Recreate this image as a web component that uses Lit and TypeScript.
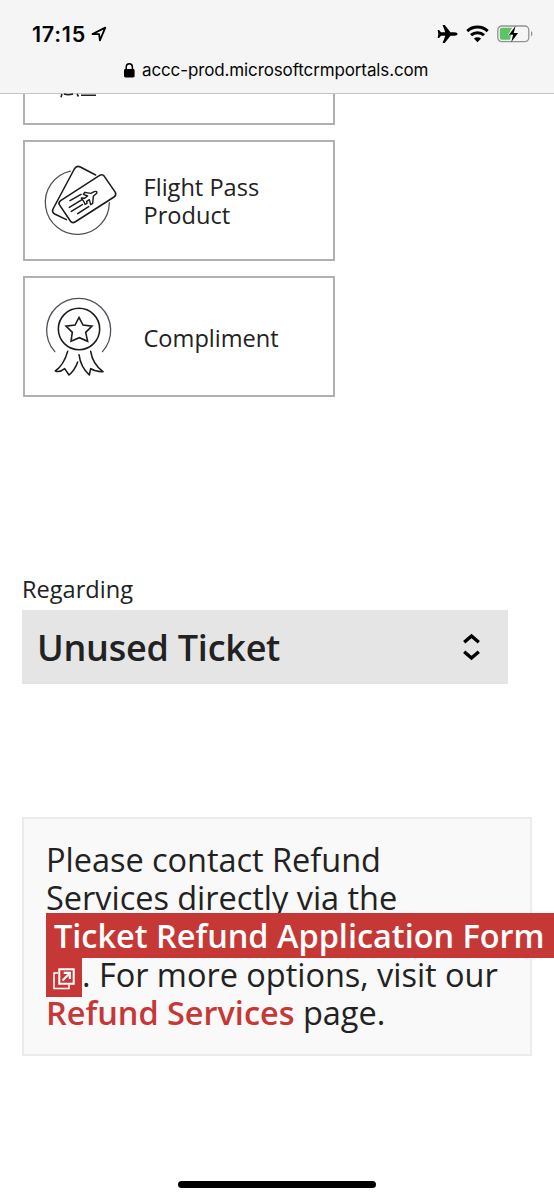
import { LitElement, html, css, svg } from "lit";
import { customElement } from "lit/decorators.js";

const passIcon = svg`
  <g fill="none" stroke="#1c1c1c" stroke-width="4.700" stroke-linejoin="round" stroke-linecap="round">
    <path stroke="#50505a" stroke-width="3.900" d="M152 108.500A96 96 0 1 0 269 203"/>
    <path d="M228 120 182 96Q171 90 164 102L100 222Q96 232 105 237L140 254"/>
    <path d="M124 196 240 121Q248 116 254 124L287 172Q291 180 283 186L166 261Q158 266 152 258L119 209Q115 202 124 196Z"/>
    <path d="M151 197 184 178M149 217 187 194M155 229 188 209M174 236 207 215"/>
    <path stroke-width="4.300" d="M185 189 194 190 204 183 191 178 196 172 213 175 224 170Q234 167 231 175L221 184 219 205 213 209 209 194 201 199 202 205 196 208 192 199Z"/>
  </g>`;

const rosetteIcon = svg`
  <g fill="none" stroke="#1c1c1c" stroke-width="4.700" stroke-linejoin="round" stroke-linecap="round">
    <path stroke="#50505a" stroke-width="3.900" d="M104.500 245A96 96 0 1 1 247.500 245"/>
    <circle cx="177" cy="177" r="62"/>
    <path stroke-linejoin="miter" d="M177 142 189 165 216 168.500 197 187 203 214 178 203 153 214 157 187 138 168.500 165 165Z"/>
    <path d="M143 244Q132 284 106 303Q120 308 134 296L147 315Q165 300 173 276M177 254Q182 292 208 315L212 296Q228 306 249 305Q218 282 212 244"/>
  </g>`;

@customElement("choice-card")
class ChoiceCard extends LitElement {
  static styles = css`
    :host { display: block; }
    .card {
      box-sizing: border-box; width: 312px; height: 121px;
      border: 2px solid #b0b0b0;
      display: flex; align-items: center; gap: 27.5px; padding-left: 13px;
      background: #fff;
    }
    ::slotted(*) { display: block; }
  `;
  render() {
    return html`<div class="card"><slot name="icon"></slot><slot></slot></div>`;
  }
}

@customElement("app-root")
class AppRoot extends LitElement {
  static styles = css`
    :host {
      display: flex; flex-direction: column; position: relative;
      width: 554px; height: 1200px; overflow: hidden; background: #fff;
      font-family: "Open Sans", "Noto Sans", sans-serif; color: #222;
    }
    .chrome {
      box-sizing: border-box; height: 94px; flex: none; background: #f5f5f5;
      border-bottom: 1px solid #c4c4c4; font-family: Inter, Roboto, sans-serif; color: #050505;
      padding-top: 20px;
    }
    .status { display: flex; align-items: center; height: 28px; padding: 0 21px 0 32px; }
    .time { font-size: 21.5px; font-weight: 600; line-height: 28px; letter-spacing: 0.75px; }
    .arrow { margin-left: 5px; }
    .signals { margin-left: auto; display: flex; align-items: center; gap: 8px; }
    .address { display: flex; align-items: center; height: 30px; margin-top: 7px; padding-left: 124px; gap: 7px; }
    .url { font-size: 17px; line-height: 30px; letter-spacing: -0.12px; white-space: nowrap; }
    svg { display: block; flex: none; overflow: visible; }
    .cards { display: flex; flex-direction: column; gap: 15px; padding-left: 23px; }
    .sliver { box-sizing: border-box; width: 312px; height: 31px; border: 2px solid #b0b0b0; border-top: 0; padding-left: 34px; }
    .label { font-size: 23.6px; line-height: 28px; white-space: pre; }
    .compliment { padding-top: 3px; }
    .field { padding: 178px 0 0 22px; }
    .caption { font-size: 23.6px; line-height: 28px; margin-bottom: 7px; }
    .select {
      box-sizing: border-box; width: 486px; height: 74px; background: #e5e5e5;
      display: flex; align-items: center; justify-content: space-between; padding: 0 28px 0 15px;
      font-size: 36px; font-weight: 580; letter-spacing: -0.25px;
    }
    .select svg { margin-top: -1px; }
    .notice {
      box-sizing: border-box; margin: 133px 0 0 22px; width: 510px; height: 239px;
      background: #f9f9f9; border: 2px solid #ebebeb; padding: 21.500px 0 0 22px;
      font-size: 32.5px; line-height: 38.4px; letter-spacing: -0.03px; white-space: nowrap;
    }
    .hot { background: #c63836; color: #fff; font-weight: 580; padding: 0 12px 0 8px; }
    .glyph { padding: 0 7px; }
    .glyph svg { display: inline-block; vertical-align: -3px; }
    .link { color: #c63836; font-weight: 580; }
    .home { margin: 124.500px auto 0; width: 198px; height: 7.500px; border-radius: 4px; background: #000; flex: none; }
  `;
  render() {
    return html`
      <header class="chrome">
        <div class="status">
          <span class="time">17:15</span>
          <svg class="arrow" width="16" height="16" viewBox="0 0 16 16"><path d="M1.500 8 14.300 1.600 8.900 14.400 8.100 8.200z" fill="none" stroke="#000" stroke-width="1.800" stroke-linejoin="round"/></svg>
          <div class="signals">
            <svg width="21" height="20" viewBox="0 0 21 20"><path d="M20.500 10c0 1-1.400 1.700-3 1.700h-4L7.700 19H5.600l2.700-7.300H4L2.100 14H.7l.6-4-.6-4h1.400L4 8.300h4.300L5.600 1h2.100l5.800 7.300h4c1.600 0 3 .7 3 1.700z"/></svg>
            <svg width="23" height="18" viewBox="0 0 23 18"><path d="M1.300 6.100a15 15 0 0 1 20.400 0M5 10.200a9.600 9.600 0 0 1 13 0" fill="none" stroke="#000" stroke-width="3"/><path d="M11.500 17.300 7.900 13.600a5.200 5.200 0 0 1 7.200 0z"/></svg>
            <svg width="36" height="18" viewBox="0 0 36 18"><rect x=".8" y="1" width="31" height="15.600" rx="4" fill="none" stroke="#929292" stroke-width="1.300"/><path d="M34 6v5.500q1.400-.6 1.400-2.700T34 6z" fill="#929292"/><path d="M4.800 2.800H15L11 10h3l-1 4.800H4.800q-2 0-2-2v-8q0-2 2-2z" fill="#5dc466"/><path d="m18.600 1-6.700 8.800h4.200L14.300 17l6.800-9h-4.400z"/></svg>
          </div>
        </div>
        <div class="address">
          <svg width="11" height="15" viewBox="0 0 11 15"><rect y="6" width="10.600" height="8.500" rx="1.400"/><path d="M2.200 7V4a3.100 3.300 0 0 1 6.200 0v3" fill="none" stroke="#000" stroke-width="1.500"/></svg>
          <span class="url">accc-prod.microsoftcrmportals.com</span>
        </div>
      </header>
      <main>
        <div class="cards">
          <div class="sliver">
            <svg width="40" height="5" viewBox="0 0 40 5"><path d="M3 0 2 3.200M5 0q4 1.500 9 0M18 0l1.500 2.500M22 1.200h15" fill="none" stroke="#222" stroke-width="1.600"/></svg>
          </div>
          <choice-card>
            <svg slot="icon" width="78" height="82" viewBox="55 75 234 246">${passIcon}</svg>
            <div class="label">Flight Pass
Product</div>
          </choice-card>
          <choice-card>
            <svg slot="icon" width="78" height="84" viewBox="54 75 234 252">${rosetteIcon}</svg>
            <div class="label compliment">Compliment</div>
          </choice-card>
        </div>
        <div class="field">
          <div class="caption">Regarding</div>
          <div class="select">
            <span>Unused Ticket</span>
            <svg width="17" height="28" viewBox="0 0 17 28"><path d="M1.200 9.300 8.500 3l7.300 6.300M1.200 18.700 8.500 25l7.300-6.300" fill="none" stroke="#000" stroke-width="3.400"/></svg>
          </div>
        </div>
        <div class="notice">
          <div>Please contact Refund</div>
          <div>Services directly via the</div>
          <div><span class="hot">Ticket Refund Application Form</span></div>
          <div><span class="hot glyph"><svg width="22" height="22" viewBox="0 0 22 22" fill="none" stroke="#fff"><path d="M5 5H1v15.500h15V17" stroke-width="1.600"/><path d="M6.300 1.300h14.400v14.400H6.300z" stroke-width="2"/><path d="m9.500 12.500 7-7M10.700 4.900h6.100V11" stroke-width="2.200"/></svg></span>. For more options, visit our</div>
          <div><span class="link">Refund Services</span> page.</div>
        </div>
      </main>
      <div class="home"></div>
    `;
  }
}
